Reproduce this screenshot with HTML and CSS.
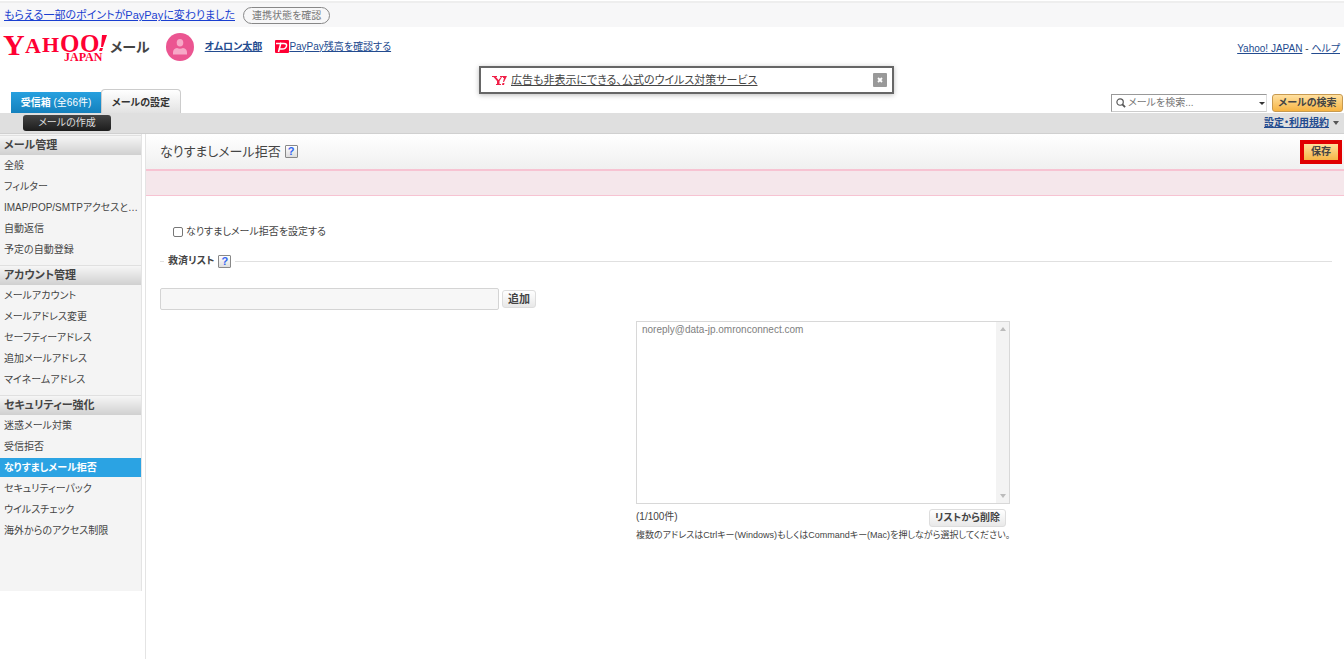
FILE: index.html
```html
<!DOCTYPE html>
<html lang="ja">
<head>
<meta charset="utf-8">
<title>Yahoo!メール - なりすましメール拒否</title>
<link rel="stylesheet" href="styles.css">
</head>
<body>
<div class="notice">
  <a class="notice-link" href="#">もらえる一部のポイントがPayPayに変わりました</a>
  <button class="notice-button" type="button">連携状態を確認</button>
</div>

<header class="header">
  <div class="brand-row">
    <svg class="logo" width="108" height="39" viewBox="0 0 108 39" role="img" aria-label="Yahoo! JAPAN">
      <g fill="#ff0033" font-family="Liberation Serif, serif" font-weight="bold">
        <text x="3" y="28" font-size="30">Y</text>
        <text x="25" y="26" font-size="22">A</text>
        <text x="42" y="25" font-size="22">H</text>
        <text x="60" y="25" font-size="25">O</text>
        <text x="80" y="25" font-size="25">O</text>
        <text x="64" y="34" font-size="12">JAPAN</text>
        <path d="M102 8h5l-4 12h-2zM100 21h3l-1 3h-3z"/>
      </g>
    </svg>
    <span class="service">メール</span>
    <svg class="avatar" width="28" height="28" viewBox="0 0 28 28" aria-hidden="true">
      <circle cx="14" cy="14" r="14" fill="#eb5591"/>
      <ellipse cx="14" cy="9.800" rx="3.300" ry="3.800" fill="#f7a8c7"/>
      <path d="M7 21.500v-2q0-4 4-4.500q3 1.500 6 0q4 .5 4 4.500v2z" fill="#f7a8c7"/>
    </svg>
    <a class="user" href="#">オムロン太郎</a>
    <a class="paypay" href="#"><svg width="14" height="13" viewBox="0 0 14 13" aria-hidden="true"><rect width="14" height="13" rx="1" fill="#f03"/><path d="M1 3.500h8q3 0 2.500 2.500q-.5 3-4.500 3H3.500M6 2.500L3.500 12" fill="none" stroke="#fff" stroke-width="1.500"/></svg>PayPay残高を確認する</a>
    <nav class="portal"><a href="#">Yahoo! JAPAN</a> - <a href="#">ヘルプ</a></nav>
  </div>
  <div class="tab-row">
    <nav class="tabs">
      <a class="tab tab-inbox" href="#"><b>受信箱</b> (全66件)</a>
      <a class="tab tab-settings" href="#">メールの設定</a>
    </nav>
    <div class="promo">
      <svg width="15" height="11" viewBox="0 0 15 11" aria-hidden="true"><path d="M0 1h5v1H4l2.500 3L9 2H8V1h3v1h-1L7.500 6v3H9v1H4V9h1V6L1.500 2H0zM11 1h4l-3 6h-1l1-4h-1zM10.500 8h2l-.5 2h-2z" fill="#f02048"/></svg>
      <a class="promo-link" href="#">広告も非表示にできる、公式のウイルス対策サービス</a>
      <button class="promo-close" type="button" aria-label="閉じる"><svg width="14" height="14" viewBox="0 0 14 14"><path d="M5 5l4 4M9 5l-4 4" stroke="#fff" stroke-width="1.800"/></svg></button>
    </div>
    <form class="search">
      <div class="search-box">
        <svg width="10" height="10" viewBox="0 0 11 11" aria-hidden="true"><circle cx="4.500" cy="4.500" r="3.500" fill="none" stroke="#555" stroke-width="1.300"/><path d="M7 7l3 3" stroke="#555" stroke-width="2"/></svg>
        <input class="search-input" type="text" placeholder="メールを検索..." aria-label="メールを検索">
        <svg width="6" height="3" viewBox="0 0 6 3" aria-hidden="true"><path d="M0 0h6L3 3z" fill="#333"/></svg>
      </div>
      <button class="search-button" type="button">メールの検索</button>
    </form>
  </div>
</header>

<div class="toolbar">
  <button class="compose" type="button">メールの作成</button>
  <a class="terms" href="#"><span>設定・利用規約</span><svg width="6" height="4" viewBox="0 0 6 4" aria-hidden="true"><path d="M0 0h6L3 4z" fill="#555"/></svg></a>
</div>

<div class="layout">
  <aside class="sidebar">
    <nav class="menu">
      <h2 class="menu-title">メール管理</h2>
      <ul class="menu-list">
        <li><a href="#">全般</a></li>
        <li><a href="#">フィルター</a></li>
        <li><a href="#">IMAP/POP/SMTPアクセスと…</a></li>
        <li><a href="#">自動返信</a></li>
        <li><a href="#">予定の自動登録</a></li>
      </ul>
      <h2 class="menu-title">アカウント管理</h2>
      <ul class="menu-list">
        <li><a href="#">メールアカウント</a></li>
        <li><a href="#">メールアドレス変更</a></li>
        <li><a href="#">セーフティーアドレス</a></li>
        <li><a href="#">追加メールアドレス</a></li>
        <li><a href="#">マイネームアドレス</a></li>
      </ul>
      <h2 class="menu-title">セキュリティー強化</h2>
      <ul class="menu-list">
        <li><a href="#">迷惑メール対策</a></li>
        <li><a href="#">受信拒否</a></li>
        <li><a class="current" href="#">なりすましメール拒否</a></li>
        <li><a href="#">セキュリティーパック</a></li>
        <li><a href="#">ウイルスチェック</a></li>
        <li><a href="#">海外からのアクセス制限</a></li>
      </ul>
    </nav>
  </aside>

  <main class="main">
    <div class="title-bar">
      <h1 class="title">なりすましメール拒否</h1>
      <button class="help" type="button" aria-label="なりすましメール拒否のヘルプ">?</button>
      <button class="save" type="button">保存</button>
    </div>
    <div class="message"></div>
    <form class="settings">
      <label class="enable"><input class="check" type="checkbox"><span>なりすましメール拒否を設定する</span></label>
      <div class="section-head">
        <h2 class="section-title">救済リスト</h2>
        <button class="help" type="button" aria-label="救済リストのヘルプ">?</button>
      </div>
      <div class="add-row">
        <input class="address" type="text" aria-label="追加するアドレス" disabled>
        <button class="gray-button" type="button">追加</button>
      </div>
      <div class="rescue">
        <div class="list-box">
          <select class="list" size="10" multiple disabled aria-label="救済リスト">
            <option>noreply@data-jp.omronconnect.com</option>
          </select>
          <div class="scroll" aria-hidden="true">
            <svg width="6" height="4" viewBox="0 0 6 4"><path d="M0 4h6L3 0z" fill="#bbb"/></svg>
            <svg width="6" height="4" viewBox="0 0 6 4"><path d="M0 0h6L3 4z" fill="#bbb"/></svg>
          </div>
        </div>
        <div class="list-foot">
          <span>(1/100件)</span>
          <button class="gray-button delete" type="button">リストから削除</button>
        </div>
        <p class="hint">複数のアドレスはCtrlキー(Windows)もしくはCommandキー(Mac)を押しながら選択してください。</p>
      </div>
    </form>
  </main>
</div>
</body>
</html>
```
FILE: styles.css
```css
* { box-sizing: border-box; }

body {
  margin: 0;
  background: #fff;
  color: #444;
  font: 10px/16px "Liberation Sans", "Noto Sans CJK JP", sans-serif;
  font-feature-settings: "palt";
}

button, input, select {
  margin: 0;
  font: inherit;
  color: inherit;
  font-feature-settings: inherit;
}

button { padding: 0; white-space: nowrap; }
h1, h2, p, ul { margin: 0; padding: 0; }
ul { list-style: none; }
a { color: #234b8f; }
svg { flex: none; }

/* Notice strip */
.notice {
  display: flex;
  align-items: center;
  gap: 8px;
  height: 26px;
  margin-top: 1px;
  padding: 0 4px;
  border-top: 2px solid #eee;
  background: #f7f7f8;
}
.notice-link { color: #1a3fd0; font-size: 11px; }
.notice-button {
  height: 17px;
  padding: 0 8px;
  border: 1px solid #888;
  border-radius: 9px;
  background: transparent;
  color: #777;
  line-height: 15px;
}

/* Header */
.brand-row {
  display: flex;
  align-items: center;
  height: 39px;
  padding-right: 4px;
}
.service { margin-left: 2px; color: #444; font-size: 14px; font-weight: bold; }
.avatar { margin-left: 16px; }
.user { margin-left: 11px; font-weight: bold; }
.paypay { display: flex; align-items: center; margin-left: 13px; }
.portal { margin: 4px 0 0 auto; }

.tab-row {
  display: grid;
  grid-template-columns: 479fr 415fr 450fr;
  height: 47px;
}
.tabs { display: flex; align-items: flex-end; padding-left: 11px; }
.tab { display: block; text-decoration: none; white-space: nowrap; }
.tab-inbox {
  width: 90px;
  height: 21px;
  background: linear-gradient(#27a0df, #1481bd);
  color: #fff;
  line-height: 21px;
  text-align: center;
}
.tab-settings {
  width: 80px;
  height: 24px;
  border: 1px solid #ccc;
  border-bottom: 0;
  border-radius: 4px 4px 0 0;
  background: linear-gradient(#fff, #e2e2e2);
  color: #333;
  font-weight: bold;
  line-height: 25px;
  text-align: center;
}
.promo {
  display: flex;
  align-items: center;
  gap: 4px;
  height: 28px;
  padding: 0 5px 0 11px;
  border: 2px solid #666;
  background: #fff;
  box-shadow: 0 1px 5px #bbb;
}
.promo-link { color: #444; font-size: 11px; white-space: nowrap; }
.promo-close {
  display: flex;
  margin-left: auto;
  border: 0;
  border-radius: 1px;
  background: #999;
}
.search {
  display: flex;
  align-items: flex-end;
  justify-content: flex-end;
  gap: 5px;
  padding: 0 1px 1px 0;
}
.search-box {
  display: flex;
  align-items: center;
  width: 156px;
  height: 18px;
  padding: 0 1px 0 4px;
  border: 1px solid;
  border-color: #999 #ddd #ccc #999;
}
.search-input {
  flex: 1;
  min-width: 0;
  height: 16px;
  padding: 0 2px;
  border: 0;
  outline: 0;
  background: transparent;
}
.search-input::placeholder { color: #777; opacity: 1; }
.search-button {
  width: 71px;
  height: 18px;
  border: 1px solid #c79a50;
  border-radius: 3px;
  background: linear-gradient(#ffe0a0, #f6b443);
  font-weight: bold;
  line-height: 16px;
}

/* Toolbar */
.toolbar {
  display: flex;
  align-items: center;
  justify-content: space-between;
  height: 21px;
  padding: 0 5px 0 23px;
  border-bottom: 1px solid #d0d0d0;
  background: #dfdfdf;
}
.compose {
  width: 88px;
  height: 16px;
  border: 0;
  border-radius: 3px;
  background: linear-gradient(#444, #1c1c1c);
  color: #ddd;
  line-height: 16px;
}
.terms { display: flex; align-items: center; gap: 4px; font-weight: bold; }

/* Columns */
.layout { display: flex; align-items: stretch; min-height: 525px; }
.sidebar {
  flex: none;
  width: 146px;
  border-right: 1px solid #e4e4e4;
}
.menu {
  width: 142px;
  padding: 1px 0 45px;
  border-right: 1px solid #e4e4e4;
  background: #f4f4f4;
}
.menu-title {
  height: 20px;
  padding-left: 4px;
  border-top: 1px solid #e0e0e0;
  background: linear-gradient(#f6f6f6, #d0d0d0);
  font-size: 11px;
  line-height: 19px;
}
.menu-list { padding-bottom: 5px; }
.menu-list li { height: 21px; padding-top: 1px; }
.menu-list a {
  display: block;
  height: 19px;
  padding-left: 4px;
  color: #444;
  line-height: 19px;
  text-decoration: none;
  white-space: nowrap;
}
.menu-list .current { background: #2ba3e3; color: #fff; font-weight: bold; }

.main { flex: 1; min-width: 0; }
.title-bar {
  display: flex;
  align-items: center;
  gap: 4px;
  height: 35px;
  padding: 0 2px 0 14px;
  background: linear-gradient(#fff, #f0f0f0);
}
.title { font-size: 13px; font-weight: normal; line-height: 20px; }
.help {
  width: 13px;
  height: 13px;
  border: 1px solid #888;
  border-radius: 1px;
  background: linear-gradient(#fff, #ddd);
  color: #36e;
  font-size: 11px;
  font-weight: bold;
  line-height: 11px;
}
.save {
  width: 42px;
  height: 24px;
  margin-left: auto;
  border: 4px solid #e00000;
  background: linear-gradient(#ffdf9b, #f5b547);
  font-weight: bold;
  line-height: 16px;
}
.message {
  height: 27px;
  border: solid #f7c3d2;
  border-width: 2px 0 1px;
  background: #f5e7eb;
}

/* Settings form */
.settings { padding: 27px 12px 0 14px; }
.enable { display: flex; align-items: center; gap: 3px; height: 18px; padding-left: 13px; }
.check {
  width: 10px;
  height: 10px;
  border: 1px solid #777;
  border-radius: 2px;
  background: #fff;
  appearance: none;
}
.check:checked { background: #2ba3e3; }
.section-head {
  display: flex;
  align-items: center;
  gap: 4px;
  margin-top: 12px;
}
.section-head::before, .section-head::after { content: ""; height: 1px; background: #e0e0e0; }
.section-head::before { width: 4px; }
.section-head::after { flex: 1; }
.section-title { font-size: 10px; line-height: 16px; }
.add-row { display: flex; align-items: center; gap: 3px; margin-top: 19px; }
.address {
  width: 339px;
  height: 22px;
  border: 1px solid #d4d4d4;
  border-radius: 2px;
  background: #f7f7f7;
}
.gray-button {
  height: 18px;
  padding: 0 5px;
  border: 1px solid #ddd;
  border-radius: 3px;
  background: linear-gradient(#fff, #e8e8e8);
  font-size: 11px;
  font-weight: bold;
  line-height: 16px;
}
.delete { font-size: 10px; }
.rescue { width: 374px; margin: 11px 0 0 476px; }
.list-box { display: flex; height: 183px; border: 1px solid #d8d8d8; }
.list {
  flex: 1;
  height: 181px;
  padding: 2px 3px;
  border: 0;
  background: #fff;
  color: #999;
  line-height: 16px;
  opacity: 1;
}
.scroll {
  display: flex;
  flex-direction: column;
  align-items: center;
  justify-content: space-between;
  width: 13px;
  padding: 5px 0;
  background: #f3f3f3;
}
.list-foot { display: flex; justify-content: space-between; margin-top: 4px; padding: 1px 4px 0 0; }
.hint { font-size: 9px; white-space: nowrap; }
```
